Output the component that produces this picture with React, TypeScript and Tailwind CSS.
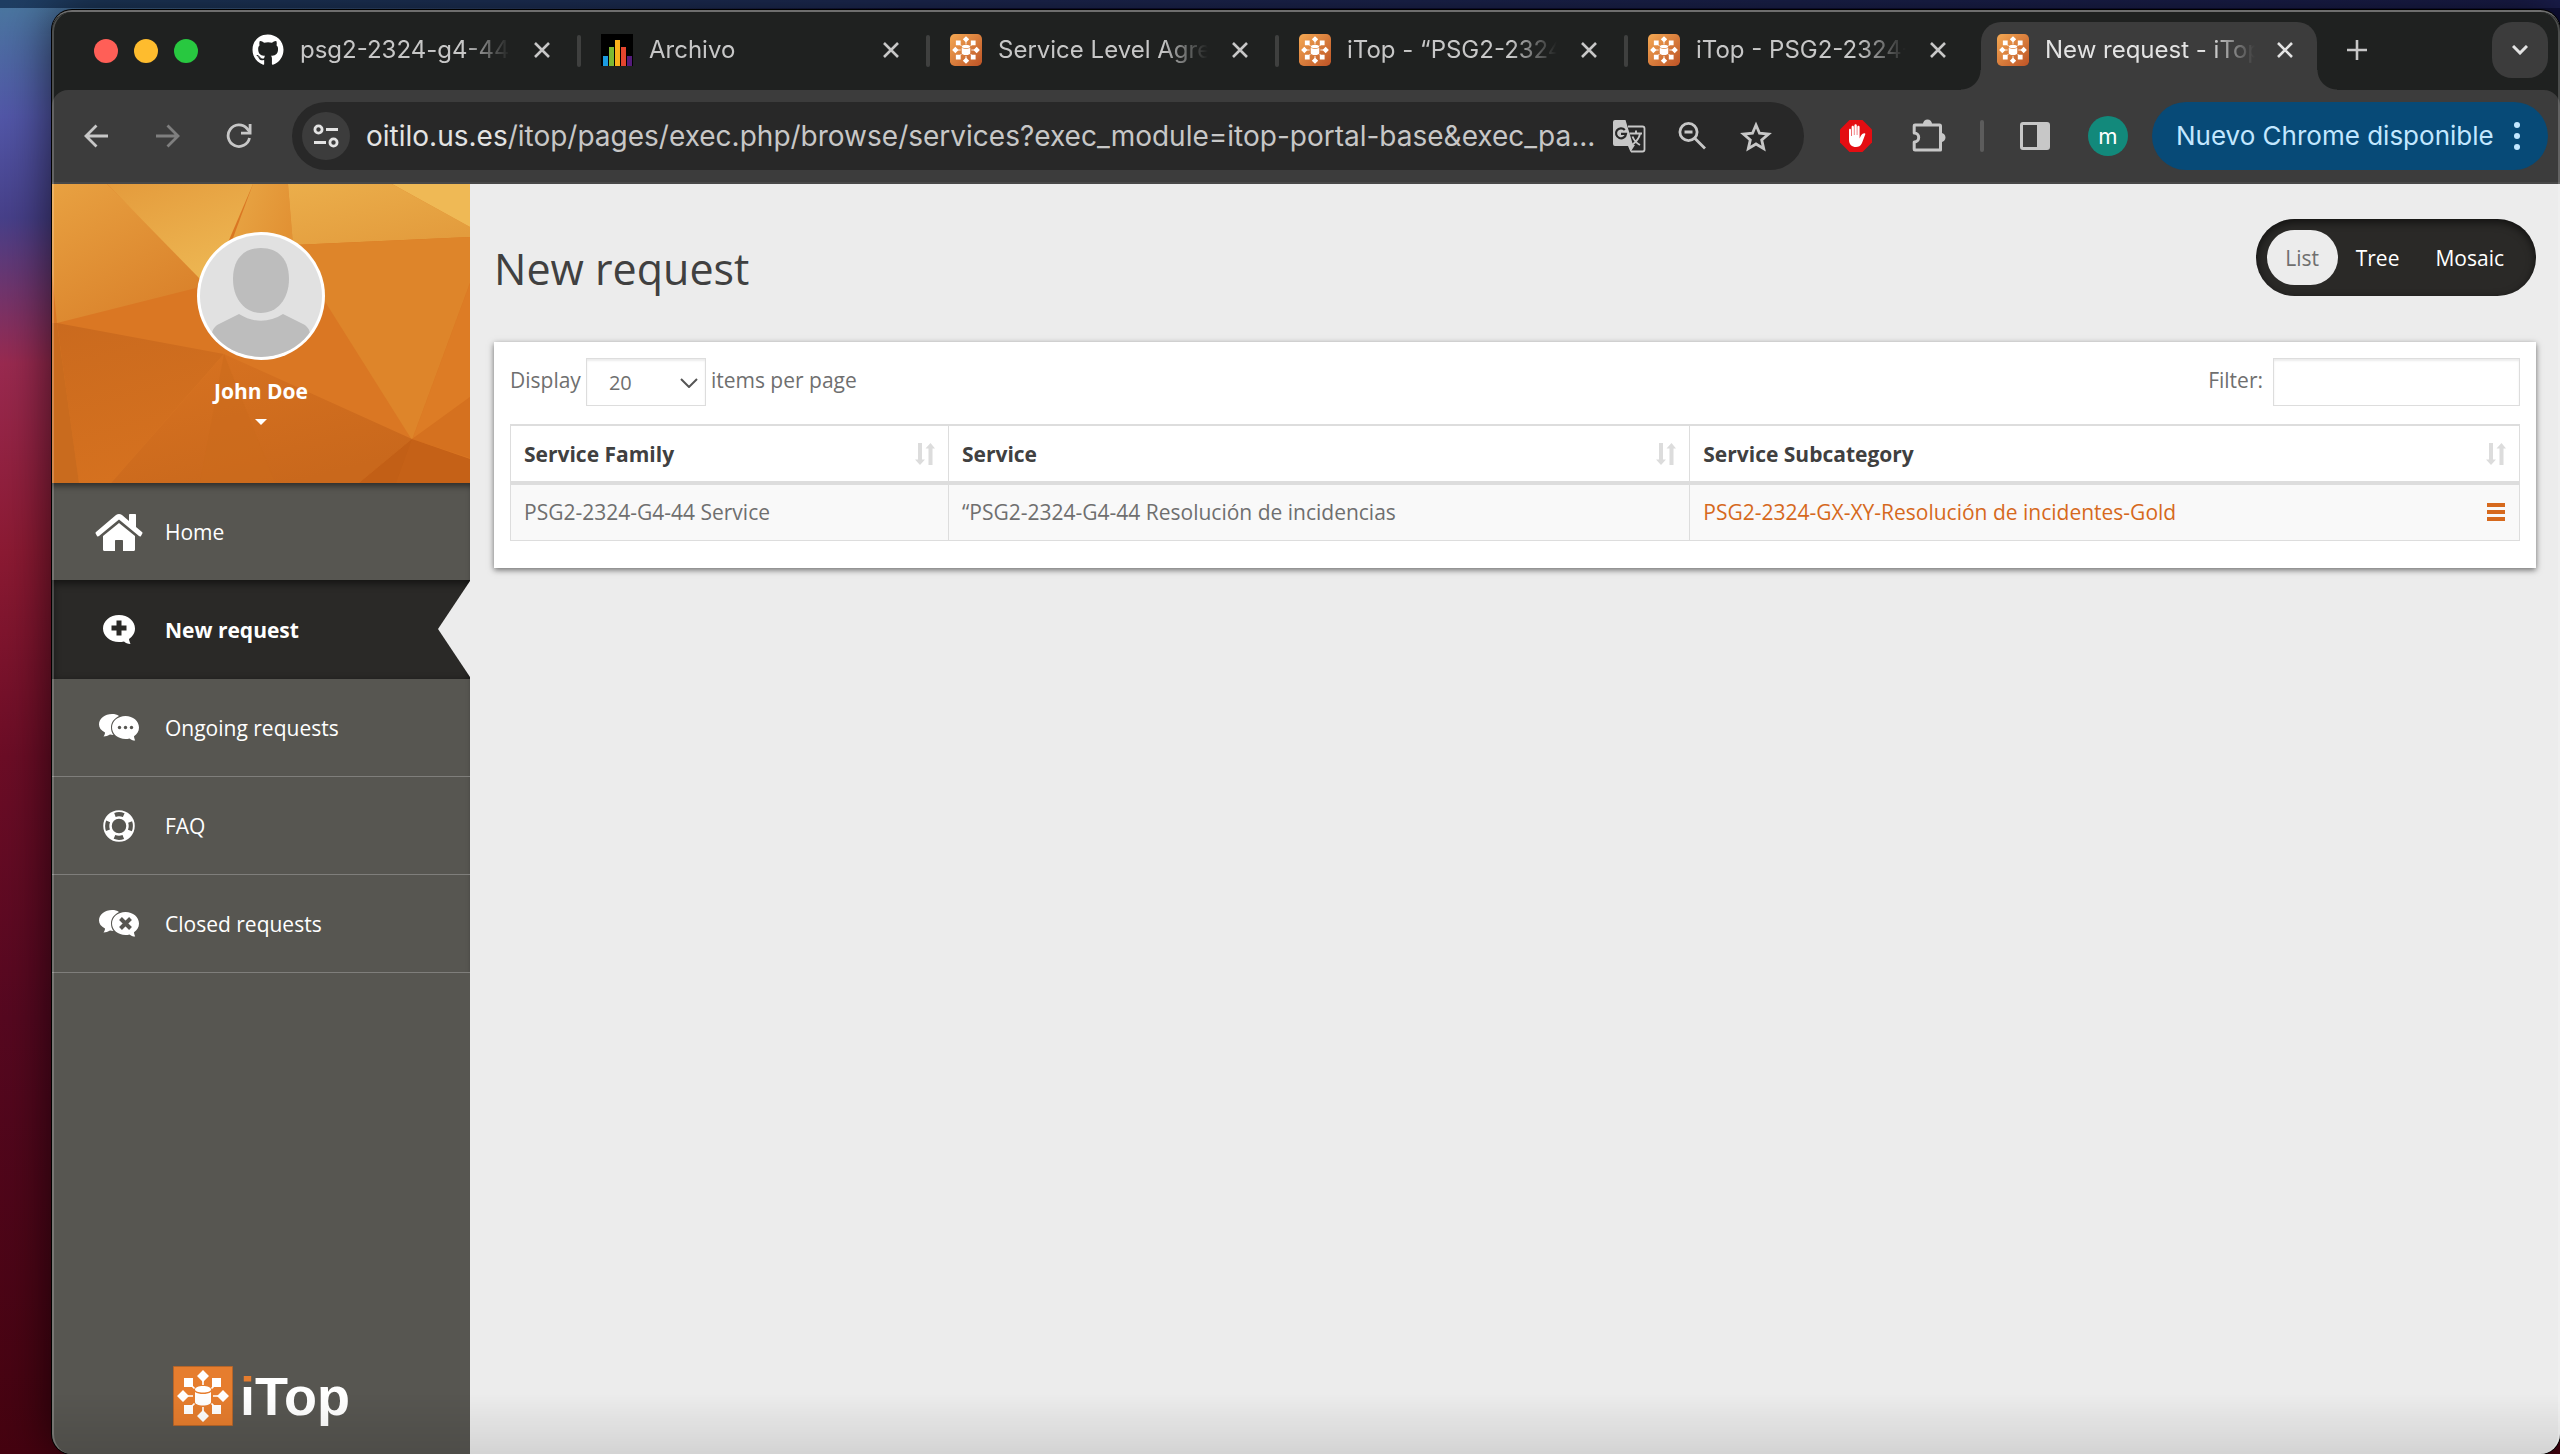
import React from "react";
import { FaGithub } from "react-icons/fa";

const inter = "font-['Inter','Roboto',sans-serif]";

function ITopMark({ bg }: { bg: React.ReactNode }) {
  return (
    <svg viewBox="0 0 60 60" className="size-full" aria-hidden="true">
      {bg}
      <g fill="#fff" stroke="#fff">
        <g stroke="none">
          <path d="M30 4l6 6-6 6-6-6zM30 44l6 6-6 6-6-6zM4 30l6-6 6 6-6 6zM44 30l6-6 6 6-6 6z" />
          <path d="M11 12h9v9h-9zM39 12h9v9h-9zM11 39h9v9h-9zM39 39h9v9h-9z" />
          <path d="M22 23.500c0-2 3.500-3.500 8-3.500s8 1.500 8 3.500-3.500 3-8 3-8-1-8-3z" />
          <path d="M22 26c2 1.500 5 2 8 2s6-.5 8-2v10c0 2-3.500 3.500-8 3.500s-8-1.500-8-3.500z" />
        </g>
        <path strokeWidth="1.600" d="M30 14v5M30 41v5M14 30h6M40 30h6M19 20l2.500 2.500M41 20l-2.500 2.500M19 40l2.500-2.500M41 40l-2.500-2.500" />
      </g>
    </svg>
  );
}

function ITopFavicon({ id }: { id: string }) {
  return (
    <ITopMark
      bg={
        <>
          <defs>
            <linearGradient id={id} x1="0" y1="0" x2="1" y2="1">
              <stop offset="0" stopColor="#f5a953" />
              <stop offset="1" stopColor="#bd5326" />
            </linearGradient>
          </defs>
          <rect width="60" height="60" rx="9" fill={`url(#${id})`} />
        </>
      }
    />
  );
}

function ArchivoIcon() {
  return (
    <svg viewBox="0 0 32 32" className="size-full" aria-hidden="true">
      <path fill="#000" d="M0 0h32v32H0z" />
      <path fill="#1b9be0" d="M2 22h5v10H2z" />
      <path fill="#7db832" d="M8 13h5v19H8z" />
      <path fill="#f9b11c" d="M14 6h5v26h-5z" />
      <path fill="#e4452e" d="M20 13h5v19h-5z" />
      <path fill="#551b7c" d="M26 22h5v10h-5z" />
    </svg>
  );
}

function CloseIcon() {
  return (
    <svg viewBox="0 0 16 16" className="size-4" fill="none" stroke="currentColor" strokeWidth="2.600" aria-hidden="true">
      <path d="M1 1l14 14M15 1L1 15" />
    </svg>
  );
}

type TabProps = { title: string; icon: React.ReactNode; active?: boolean; divider?: boolean };

function Tab({ title, icon, active, divider }: TabProps) {
  return (
    <div
      className={
        active
          ? "relative flex h-[68px] w-[336px] shrink-0 items-center rounded-t-[20px] bg-[#3c3c3c] pb-3 pl-4 pr-6 text-[#e3e3e3]"
          : "relative flex h-[68px] w-[349px] shrink-0 items-center pb-3 pl-4 pr-[35px] text-[#c7c7c7]"
      }
    >
      <span className="size-8 shrink-0">{icon}</span>
      <button
        type="button"
        className="ml-4 w-[210px] shrink-0 overflow-hidden whitespace-nowrap text-left text-[24px] leading-8 [mask-image:linear-gradient(to_right,black_78%,transparent_100%)]"
      >
        {title}
      </button>
      <button type="button" aria-label={`Close ${title}`} className="ml-auto">
        <CloseIcon />
      </button>
      {divider && <span className="absolute right-1 top-[13px] h-8 w-1 rounded-full bg-[#3f403f]" />}
      {active && (
        <>
          <span className="absolute -left-5 bottom-0 size-5 bg-[radial-gradient(circle_at_0_0,transparent_19px,#3c3c3c_20px)]" />
          <span className="absolute -right-5 bottom-0 size-5 bg-[radial-gradient(circle_at_100%_0,transparent_19px,#3c3c3c_20px)]" />
        </>
      )}
    </div>
  );
}

function TabStrip() {
  return (
    <div className="flex h-[78px] items-end bg-[#1f2120] pr-3">
      <div className="flex w-[184px] shrink-0 gap-4 self-center pl-[42px]">
        <button type="button" aria-label="Close window" className="size-6 rounded-full bg-[#ff5f57]" />
        <button type="button" aria-label="Minimise window" className="size-6 rounded-full bg-[#febc2e]" />
        <button type="button" aria-label="Zoom window" className="size-6 rounded-full bg-[#28c840]" />
      </div>
      <Tab title="psg2-2324-g4-44" icon={<FaGithub className="size-8 text-white" />} divider />
      <Tab title="Archivo" icon={<ArchivoIcon />} divider />
      <Tab title="Service Level Agree" icon={<ITopFavicon id="fav-a" />} divider />
      <Tab title="iTop - “PSG2-2324" icon={<ITopFavicon id="fav-b" />} divider />
      <Tab title="iTop - PSG2-2324-" icon={<ITopFavicon id="fav-c" />} />
      <Tab title="New request - iTop" icon={<ITopFavicon id="fav-d" />} active />
      <button type="button" aria-label="New tab" className="mb-[30px] ml-[30px] text-[#c7c7c7]">
        <svg viewBox="0 0 20 20" className="size-5" stroke="currentColor" strokeWidth="2.600" aria-hidden="true">
          <path d="M10 0v20M0 10h20" />
        </svg>
      </button>
      <button
        type="button"
        aria-label="Search tabs"
        className="mb-3 ml-auto flex size-14 items-center justify-center rounded-[20px] bg-[#3c3c3c] text-[#e3e3e3]"
      >
        <svg viewBox="0 0 16 10" className="h-[10px] w-4" fill="none" stroke="currentColor" strokeWidth="3" aria-hidden="true">
          <path d="M1 1l7 7 7-7" />
        </svg>
      </button>
    </div>
  );
}

function Toolbar() {
  return (
    <div className="bg-[#1f2120]">
      <div className="flex h-[94px] items-center rounded-t-[16px] border-b-2 border-[#484848] bg-[#3c3c3c] pl-8 pr-3 text-[#c7c7c7]">
        <button type="button" aria-label="Back">
          <svg viewBox="0 0 24 24" className="size-6" fill="none" stroke="currentColor" strokeWidth="2.800" aria-hidden="true">
            <path d="M24 12H2M12.500 1.500L2 12l10.500 10.500" />
          </svg>
        </button>
        <button type="button" aria-label="Forward" className="ml-12 text-[#7f7f7f]">
          <svg viewBox="0 0 24 24" className="size-6" fill="none" stroke="currentColor" strokeWidth="2.800" aria-hidden="true">
            <path d="M0 12h22M11.500 1.500L22 12 11.500 22.500" />
          </svg>
        </button>
        <button type="button" aria-label="Reload" className="ml-[46px]">
          <svg viewBox="0 0 26 26" className="size-[26px]" aria-hidden="true">
            <path fill="none" stroke="currentColor" strokeWidth="2.800" d="M23.500 15A10.800 10.800 0 1 1 21 5.500L24 9" />
            <path fill="currentColor" d="M25.500 1v10.500H15V8.700h7.700V1z" />
          </svg>
        </button>
        <div className="ml-10 flex h-[68px] min-w-0 flex-1 items-center rounded-full bg-[#282828] pl-[10px] pr-8">
          <button
            type="button"
            aria-label="Site information"
            className="flex size-12 shrink-0 items-center justify-center rounded-full bg-[#3c3c3c] text-[#e3e3e3]"
          >
            <svg viewBox="0 0 26 24" className="h-6 w-[26px]" fill="none" stroke="currentColor" strokeWidth="2.800" aria-hidden="true">
              <circle cx="5.500" cy="5.500" r="3.600" />
              <path d="M13 5.500h12M1 18.500h12" />
              <circle cx="20.500" cy="18.500" r="3.600" />
            </svg>
          </button>
          <button type="button" className="ml-4 min-w-0 flex-1 truncate text-left text-[28px] leading-10">
            <span className="text-[#e3e3e3]">oitilo.us.es</span>/itop/pages/exec.php/browse/services?exec_module=itop-portal-base&amp;exec_pa...
          </button>
          <button type="button" aria-label="Translate" className="ml-2 shrink-0">
            <svg viewBox="0 0 34 34" className="size-[34px]" aria-hidden="true">
              <path fill="none" stroke="currentColor" strokeWidth="1.800" d="M16 7.500h14.500a2 2 0 0 1 2 2v21a2 2 0 0 1-2 2H19" />
              <path fill="currentColor" d="M3 1h10.500l7.500 25h2l-4.500 7L16 27H3a2 2 0 0 1-2-2V3a2 2 0 0 1 2-2z" />
              <path fill="none" stroke="#282828" strokeWidth="2.200" d="M12.800 11A5 5 0 1 0 14 14.800H9" />
              <path fill="none" stroke="currentColor" strokeWidth="1.900" d="M17.500 14.500H30M24 11.500v3M28 15c-1 4.500-4 8-8 11M20.500 17.500c1.500 4 4 6.500 7.500 8.500" />
            </svg>
          </button>
          <button type="button" aria-label="Zoom" className="ml-8 shrink-0">
            <svg viewBox="0 0 28 28" className="size-7" fill="none" stroke="currentColor" strokeWidth="2.800" aria-hidden="true">
              <circle cx="10.500" cy="10" r="8.600" />
              <path d="M6.500 10h8M16.500 16L27 26.500" />
            </svg>
          </button>
          <button type="button" aria-label="Bookmark this page" className="ml-[34px] shrink-0">
            <svg viewBox="0 0 32 31" className="h-[31px] w-8" fill="none" stroke="currentColor" strokeWidth="2.800" aria-hidden="true">
              <path d="M16 4l3.500 8.200 9 .8-6.800 5.900 2 8.700L16 23l-7.700 4.600 2-8.700L3.500 13l9-.8z" />
            </svg>
          </button>
        </div>
        <button type="button" aria-label="AdBlock" className="ml-9">
          <svg viewBox="0 0 32 32" className="size-8" aria-hidden="true">
            <path fill="#e40d12" d="M9.500 0h13L32 9.500v13L22.500 32h-13L0 22.500v-13z" />
            <path
              fill="#fff"
              d="M9 10c0-1.600 2-1.600 2 0v6h.6V7c0-1.800 2.300-1.800 2.300 0v8h.5V5.500c0-1.800 2.400-1.800 2.400 0V15h.5V7c0-1.800 2.300-1.800 2.300 0v11.500c1-2.500 2.500-5.500 4.900-5.300 1 .2 1 .8.700 1.400L22 23c-1.500 3-3.500 4-6 4-4 0-7-2.500-7-7z"
            />
          </svg>
        </button>
        <button type="button" aria-label="Extensions" className="ml-10">
          <svg viewBox="0 0 34 34" className="size-[34px]" aria-hidden="true">
            <path
              fill="none"
              stroke="currentColor"
              strokeWidth="3"
              strokeLinejoin="round"
              d="M3 6h24.500a1 1 0 0 1 1 1v24H3a.8.8 0 0 1-.8-.8V23c6 0 6-9 0-9V6.800A.8.8 0 0 1 3 6z"
            />
            <path fill="currentColor" d="M11 5a4.500 4.500 0 0 1 9 0zM29 14a4.500 4.500 0 0 1 0 9z" />
          </svg>
        </button>
        <span className="ml-[34px] h-8 w-1 rounded-full bg-[#5c5c5c]" />
        <button type="button" aria-label="Side panel" className="ml-9">
          <svg viewBox="0 0 30 28" className="h-7 w-[30px]" aria-hidden="true">
            <path fill="currentColor" fillRule="evenodd" d="M3 0h24a3 3 0 0 1 3 3v22a3 3 0 0 1-3 3H3a3 3 0 0 1-3-3V3a3 3 0 0 1 3-3zm0 3v22h14V3z" />
          </svg>
        </button>
        <button type="button" aria-label="Profile" className="ml-[38px] size-10 shrink-0 rounded-full bg-[#12897b] text-[22px] leading-10 text-white">
          m
        </button>
        <button
          type="button"
          className="ml-6 flex h-[68px] w-[396px] shrink-0 items-center justify-between rounded-full bg-[#074a77] pl-6 pr-7 text-[26px] leading-9 text-[#c2e7ff]"
        >
          <span className="whitespace-nowrap">Nuevo Chrome disponible</span>
          <svg viewBox="0 0 6 28" className="h-7 w-[6px]" fill="currentColor" aria-hidden="true">
            <circle cx="3" cy="3" r="3" />
            <circle cx="3" cy="14" r="3" />
            <circle cx="3" cy="25" r="3" />
          </svg>
        </button>
      </div>
    </div>
  );
}

function UserPanel() {
  return (
    <div className="relative z-10 flex h-[299px] flex-col items-center overflow-hidden pt-12">
      <svg viewBox="0 0 418 299" preserveAspectRatio="none" className="absolute inset-0 size-full" aria-hidden="true">
        <defs>
          <linearGradient id="lp1" x1="0" y1="0" x2=".6" y2="1">
            <stop offset="0" stopColor="#e8a141" />
            <stop offset="1" stopColor="#da822b" />
          </linearGradient>
          <linearGradient id="lp2" x1="0" y1="0" x2=".6" y2="1">
            <stop offset="0" stopColor="#e49b3c" />
            <stop offset="1" stopColor="#edb652" />
          </linearGradient>
          <linearGradient id="lp3" x1="0" y1="0" x2="1" y2=".4">
            <stop offset="0" stopColor="#e9a947" />
            <stop offset="1" stopColor="#e29234" />
          </linearGradient>
          <linearGradient id="lp4" x1="0" y1="0" x2=".7" y2="1">
            <stop offset="0" stopColor="#ebae4b" />
            <stop offset="1" stopColor="#e39c3d" />
          </linearGradient>
          <linearGradient id="lp5" x1="0" y1="0" x2=".3" y2="1">
            <stop offset="0" stopColor="#ca6a1e" />
            <stop offset="1" stopColor="#d5711f" />
          </linearGradient>
          <linearGradient id="lp6" x1="0" y1="0" x2=".6" y2="1">
            <stop offset="0" stopColor="#d87321" />
            <stop offset="1" stopColor="#c9681c" />
          </linearGradient>
        </defs>
        <path fill="#da7723" d="M0 0h418v299H0z" />
        <path fill="url(#lp1)" d="M0 0h55l95 96-6 8L5 139 0 90z" />
        <path fill="url(#lp2)" d="M55 0h146l-30 70-22 26z" />
        <path fill="url(#lp3)" d="M201 0h35l5 61-70 20z" />
        <path fill="url(#lp4)" d="M236 0h104l78 43v10l-177 8z" />
        <path fill="#efb955" d="M340 0h78v43z" />
        <path fill="#de852a" d="M241 61l177-8v46l-58 157-88-140z" />
        <path fill="#dd7c25" d="M418 99v114l-58 43z" />
        <path fill="#d5711f" d="M418 213v61l-58-19z" />
        <path fill="url(#lp5)" d="M5 139l167 31L59 299H27z" />
        <path fill="#c96b1e" d="M0 139h5l22 160H0z" />
        <path fill="url(#lp6)" d="M172 170l188 85-53 44H59z" />
        <path fill="#cb6a1c" d="M172 170l51 129h-75z" opacity=".6" />
        <path fill="#c56117" d="M360 255l58 20v24H307z" />
        <path fill="#bf5d16" d="M360 255l-53 44h37z" opacity=".6" />
      </svg>
      <svg viewBox="0 0 128 128" className="relative size-32" aria-hidden="true">
        <defs>
          <clipPath id="avatar-clip">
            <circle cx="64" cy="64" r="61" />
          </clipPath>
        </defs>
        <circle cx="64" cy="64" r="64" fill="#fff" />
        <g clipPath="url(#avatar-clip)">
          <path fill="#e1e1e1" d="M0 0h128v128H0z" />
          <path fill="#bdbdbd" d="M64 16c18 0 28 12 28 31 0 20-12 34-28 34S36 67 36 47c0-19 10-31 28-31z" />
          <path fill="#bdbdbd" d="M42 82c14 9 30 9 44 0l20 10c4 2 7 6 7 10v26H15v-26c0-4 3-8 7-10z" />
        </g>
      </svg>
      <button type="button" className="relative mt-4 flex flex-col items-center text-[21px] font-bold leading-[30px] text-white">
        John Doe
        <span className="mt-[13px] border-x-[6px] border-t-[6px] border-x-transparent border-t-white" />
      </button>
    </div>
  );
}

const HomeIcon = (
  <svg viewBox="0 0 48 38" className="h-[38px] w-12" fill="#fff" aria-hidden="true">
    <path d="M24 1c1 0 2 .3 3 1l7 6V2c0-.8.5-1 1-1h5c.7 0 1 .4 1 1v12l6 5c.7.600.7 1 .2 1.700L46 23c-.6.700-1.300.600-2 .100L24 6.500 4 23c-.7.500-1.400.600-2-.100L.800 20.800c-.5-.7-.4-1.200.2-1.800L21 2c1-.7 2-1 3-1z" />
    <path d="M24 10l16 13v13.500c0 .900-.5 1.500-1.500 1.500H28V28c0-.7-.4-1-1-1h-6c-.6 0-1 .3-1 1v10H9.500C8.500 38 8 37.400 8 36.500V23z" />
  </svg>
);

const PlusBubbleIcon = (
  <svg viewBox="0 0 32 29" className="h-[29px] w-8" aria-hidden="true">
    <path fill="#fff" d="M16 0c9 0 16 6 16 13.500 0 4.500-2.500 8-6 10.500.3 2 .8 3.300 1.500 5-3-.2-5-1.200-6.500-2.600-1.600.4-3.300.6-5 .6C7 27 0 21 0 13.500S7 0 16 0z" />
    <path stroke="#2a2927" strokeWidth="5" d="M16 5.500v15M8.500 13h15" />
  </svg>
);

function BubblesIcon({ children }: { children: React.ReactNode }) {
  return (
    <svg viewBox="0 0 40 28" className="h-7 w-10" aria-hidden="true">
      <path fill="#fff" d="M13 0c3 0 5 .5 7 2-5 2.500-8 6.500-8 11.500 0 3 1 5.500 2.500 7.500-1.300 0-2.300 0-3.500-.400C9 22 7 22.400 4.500 22.400c1-1.200 1.500-2.600 1.500-3.900C2 16.500 0 13.500 0 10.500 0 4.500 6 0 13 0z" />
      <path fill="#fff" d="M26.500 2C34 2 40 7 40 13.500c0 4-2 6.500-5 8.700.2 1.800.6 3 1.200 4.300-2.600 0-4.300-.9-5.700-2.100-1.300.3-2.600.6-4 .6C19 25 13 20 13 13.500S19 2 26.500 2z" />
      {children}
    </svg>
  );
}

const DotsBubbleIcon = (
  <BubblesIcon>
    <g fill="#575651">
      <circle cx="20.500" cy="13.500" r="1.700" />
      <circle cx="26.500" cy="13.500" r="1.700" />
      <circle cx="32.500" cy="13.500" r="1.700" />
    </g>
  </BubblesIcon>
);

const CrossBubbleIcon = (
  <BubblesIcon>
    <path stroke="#575651" strokeWidth="4" d="M21.500 8.500l10 10M31.500 8.500l-10 10" />
  </BubblesIcon>
);

const LifebuoyIcon = (
  <svg viewBox="0 0 32 32" className="size-8" aria-hidden="true">
    <circle cx="16" cy="16" r="11.500" fill="none" stroke="#fff" strokeWidth="8.500" />
    <circle cx="16" cy="16" r="11.800" fill="none" stroke="#575651" strokeWidth="4.200" strokeDasharray="9 9.535" strokeDashoffset="4.500" />
  </svg>
);

const menu = [
  { label: "Home", icon: HomeIcon },
  { label: "New request", icon: PlusBubbleIcon, active: true },
  { label: "Ongoing requests", icon: DotsBubbleIcon },
  { label: "FAQ", icon: LifebuoyIcon },
  { label: "Closed requests", icon: CrossBubbleIcon },
];

function Sidebar() {
  return (
    <aside className="flex w-[418px] shrink-0 flex-col bg-[#575651]">
      <UserPanel />
      <nav className="shadow-[inset_0_6px_6px_-3px_rgba(0,0,0,0.5)]">
        <ul>
          {menu.map((item) => (
            <li
              key={item.label}
              className={
                item.active
                  ? "relative h-[99px] bg-[#2a2927] shadow-[inset_0_3px_8px_rgba(0,0,0,0.6)]"
                  : item.label === "Home"
                    ? "h-[97px]"
                    : "h-[98px] border-b border-[#7f7e7b]"
              }
            >
              <a
                href="#"
                className={
                  item.active
                    ? "flex h-full items-center pl-[37px] text-[21px] font-bold leading-[30px] text-white"
                    : "flex h-full items-center pl-[37px] text-[21px] leading-[30px] text-white"
                }
              >
                <span className="flex w-[60px] justify-center">{item.icon}</span>
                <span className="ml-4">{item.label}</span>
              </a>
              {item.active && (
                <span className="absolute right-0 top-[1px] border-y-[48px] border-r-[32px] border-y-transparent border-r-[#ececec]" />
              )}
            </li>
          ))}
        </ul>
      </nav>
      <a href="#" aria-label="iTop" className="mb-7 ml-[121px] mt-auto flex items-center gap-[7px]">
        <span className="size-[60px]">
          <ITopMark bg={<path fill="#e67d2e" stroke="#b5652a" d="M.5.500h59v59H.500z" />} />
        </span>
        <span className="font-['Liberation_Sans',sans-serif] text-[54px] font-bold leading-[60px] text-white">
          <span className="bg-[linear-gradient(to_bottom,#e67d2e_29%,#ffffff_29%)] bg-clip-text text-transparent">i</span>Top
        </span>
      </a>
    </aside>
  );
}

function SortIcon() {
  return (
    <svg viewBox="0 0 20 22" className="h-[22px] w-5 shrink-0" fill="#dcdcdc" aria-hidden="true">
      <path d="M3 0h4v16.500h3L5 22l-5-5.500h3zM13.500 22h4V5.500h2.500L15.500 0 10.500 5.500h3z" />
    </svg>
  );
}

function HeaderCell({ children, width }: { children: React.ReactNode; width: string }) {
  return (
    <th scope="col" className={`border border-b-4 border-t-2 border-[#dddddd] p-0 text-left font-bold text-[#404040] ${width}`}>
      <button type="button" className="flex h-[55px] w-full items-center justify-between px-[13px]">
        {children}
        <SortIcon />
      </button>
    </th>
  );
}

function Main() {
  return (
    <main className="min-w-0 flex-1 bg-[#ececec] px-6 text-[21px] leading-[30px] text-[#6f6f6f]">
      <header className="flex items-start justify-between pt-[35px]">
        <h1 className="mt-[22px] text-[43px] leading-[55px] text-[#404040]">New request</h1>
        <div className="flex h-[77px] items-center rounded-full bg-[#2a2927] pl-[11px] pr-8 text-white shadow-[inset_0_3px_8px_rgba(0,0,0,0.6)]">
          <button type="button" className="h-[55px] w-[71px] rounded-[28px] bg-[#ececec] text-[#6f6f6f]">
            List
          </button>
          <button type="button" className="ml-[18px]">Tree</button>
          <button type="button" className="ml-9">Mosaic</button>
        </div>
      </header>
      <section className="mt-[46px] bg-white px-4 pb-[27px] pt-4 shadow-[0_2px_6px_rgba(0,0,0,0.55)]">
        <div className="flex items-center justify-between">
          <div className="flex items-center">
            <label htmlFor="page-size" className="mb-1">Display</label>
            <div className="relative ml-[5px] mr-[5px]">
              <select
                id="page-size"
                className="h-12 w-[120px] appearance-none border border-[#dddddd] bg-white pl-[22px] pt-[2px] text-[20px] shadow-[inset_0_2px_2px_rgba(0,0,0,0.08)]"
              >
                <option>20</option>
              </select>
              <svg viewBox="0 0 18 10" className="pointer-events-none absolute right-2 top-5 h-[10px] w-[18px]" fill="none" stroke="#555" strokeWidth="2" aria-hidden="true">
                <path d="M1 1l8 8 8-8" />
              </svg>
            </div>
            <span className="mb-1">items per page</span>
          </div>
          <div className="flex items-center">
            <label htmlFor="filter" className="mb-1">Filter:</label>
            <input
              id="filter"
              type="text"
              className="ml-[10px] h-12 w-[247px] border border-[#dddddd] bg-white px-3 shadow-[inset_0_2px_2px_rgba(0,0,0,0.08)]"
            />
          </div>
        </div>
        <table className="mt-[18px] w-full border-collapse">
          <thead>
            <tr>
              <HeaderCell width="w-[21.8%]">Service Family</HeaderCell>
              <HeaderCell width="w-[36.9%]">Service</HeaderCell>
              <HeaderCell width="w-[41.3%]">Service Subcategory</HeaderCell>
            </tr>
          </thead>
          <tbody>
            <tr className="h-[57px] bg-[#f9f9f9]">
              <td className="border border-[#dddddd] px-[13px]">PSG2-2324-G4-44 Service</td>
              <td className="border border-[#dddddd] px-[13px]">“PSG2-2324-G4-44 Resolución de incidencias</td>
              <td className="border border-[#dddddd] px-[13px]">
                <div className="flex items-center justify-between">
                  <a href="#" className="text-[#d6691d]">PSG2-2324-GX-XY-Resolución de incidentes-Gold</a>
                  <button type="button" aria-label="Actions" className="mr-[1px]">
                    <svg viewBox="0 0 18 18" className="size-[18px]" fill="#d6691d" aria-hidden="true">
                      <path d="M0 0h18v4H0zM0 7h18v4H0zM0 14h18v4H0z" />
                    </svg>
                  </button>
                </div>
              </td>
            </tr>
          </tbody>
        </table>
      </section>
    </main>
  );
}

export default function App() {
  return (
    <div className="flex h-screen flex-col overflow-hidden bg-[linear-gradient(to_bottom,#4a78a0_0%,#5257a8_8%,#47408a_15%,#9a2a50_25%,#8c1a33_38%,#6c0d26_52%,#560820_70%,#450310_100%)]">
      <div className="h-2 shrink-0 bg-[linear-gradient(to_right,#1f3e63,#1f2a58_40%,#1b1e4e)]" />
      <div className="flex min-h-0 flex-1 bg-[linear-gradient(to_right,transparent_34px,#0f1038_900px)] bg-[length:100%_26px] bg-no-repeat pl-[52px] pt-[2px]">
        <div className="relative flex min-w-0 flex-1 flex-col overflow-hidden rounded-[20px] border-t-2 border-[#6e6e6e] bg-[#1f2120] shadow-[0_0_0_1px_#000,0_0_50px_rgba(0,0,0,0.7)]">
          <div className={inter}>
            <TabStrip />
            <Toolbar />
          </div>
          <div className="flex min-h-0 flex-1 font-['Open_Sans','Noto_Sans',sans-serif]">
            <Sidebar />
            <Main />
          </div>
          <div className="pointer-events-none absolute inset-0 z-20 rounded-[20px] border-x-2 border-white/20 bg-[linear-gradient(to_top,rgba(0,0,0,0.1),transparent_60px)]" />
        </div>
      </div>
    </div>
  );
}
